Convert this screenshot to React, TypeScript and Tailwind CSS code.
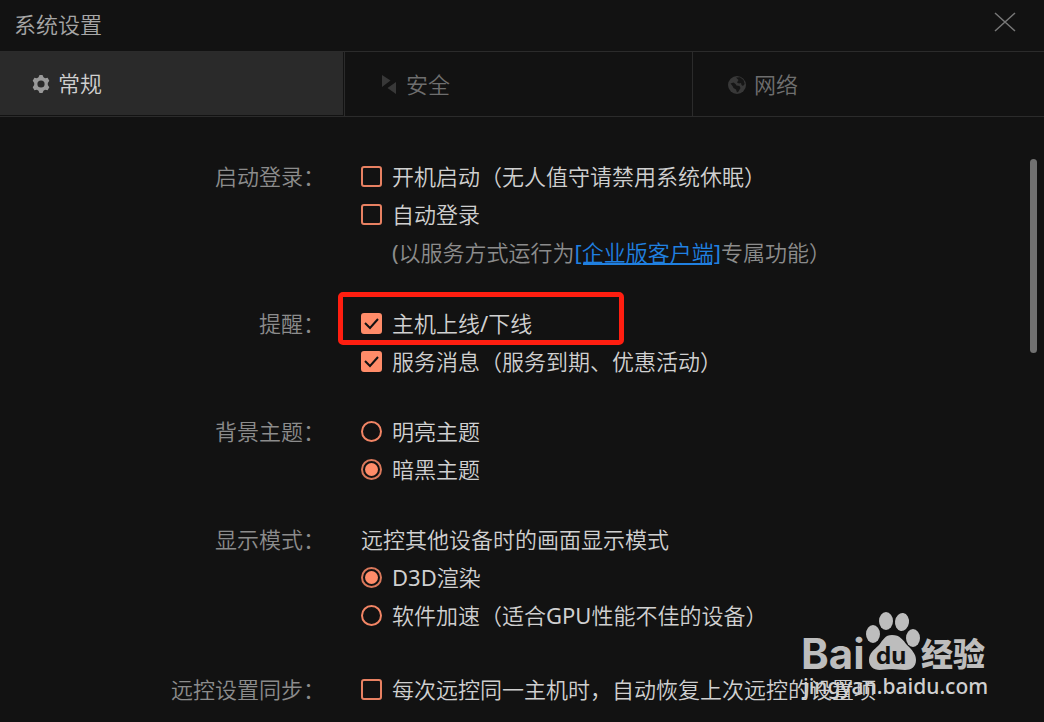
import { useState } from "react";
import type { ReactNode } from "react";

const GearIcon = () => (
  <svg className="h-[18px] w-[18px] shrink-0" viewBox="0 0 18 18" aria-hidden="true">
    <path
      d="M7.500 0h3l1 2.300 1.600.9 2.500-.4 1.700 2.900L15.800 8v2l1.500 2.300-1.700 2.900-2.500-.4-1.600.9-1 2.300h-3l-1-2.300-1.600-.9-2.500.4L.7 12.300 2.200 10V8L.7 5.700l1.700-2.900 2.500.4 1.600-.9z"
      fill="#999"
    />
    <circle cx="9" cy="9" r="3.6" fill="#2a2a2a" />
  </svg>
);

const ArrowsIcon = () => (
  <svg className="h-[19px] w-[18px] shrink-0" viewBox="0 0 18 19" fill="#383838" aria-hidden="true">
    <path d="M2 0l8.500 5.500L2 12zM16 7v12l-8.500-6z" />
  </svg>
);

const GlobeIcon = () => (
  <svg className="h-[18px] w-[18px] shrink-0" viewBox="0 0 18 18" aria-hidden="true">
    <circle cx="9" cy="9" r="9" fill="#383838" />
    <path
      d="M8 1.500l4-.3 3.500 2.800 1.200 4-1.700 2-1.500-1-.5-2-2 .5-2-1 1.500-2.500zM2.500 7.500l3-1 2 1.500 1 1.500 3 .5 1 2-2 3.500-1.500 1-1-3-2.500-1.500-1-2z"
      fill="#161616"
    />
  </svg>
);

const tabs = [
  { name: "常规", icon: GearIcon },
  { name: "安全", icon: ArrowsIcon },
  { name: "网络", icon: GlobeIcon },
];

const Section = ({ title, children }: { title: string; children: ReactNode }) => (
  <section className="flex gap-9">
    <h2 className="w-[325px] shrink-0 text-right leading-[38px] text-[#8c8c8c]">{title}</h2>
    <div className="min-w-0 flex-1">{children}</div>
  </section>
);

const Check = ({ label, checked = false }: { label: string; checked?: boolean }) => (
  <label className="flex h-[38px] w-fit items-center gap-2.5 whitespace-nowrap">
    <span className="grid shrink-0">
      <input
        type="checkbox"
        defaultChecked={checked}
        className="peer col-start-1 row-start-1 size-[21px] appearance-none rounded-[3px] border-2 border-[#e88162] checked:border-[#ff8c69] checked:bg-[#ff8c69]"
      />
      <svg
        className="pointer-events-none invisible col-start-1 row-start-1 size-[21px] peer-checked:visible"
        viewBox="0 0 21 21"
        fill="none"
        stroke="#121212"
        strokeWidth="2"
        aria-hidden="true"
      >
        <path d="M4 10l5 5 8-9" />
      </svg>
    </span>
    {label}
  </label>
);

const Radio = ({ label, name, checked = false }: { label: string; name: string; checked?: boolean }) => (
  <label className="flex h-[38px] w-fit items-center gap-2.5 whitespace-nowrap">
    <span className="grid shrink-0 place-items-center">
      <input
        type="radio"
        name={name}
        defaultChecked={checked}
        className="peer col-start-1 row-start-1 size-[21px] appearance-none rounded-full border-2 border-[#f28565] checked:border-[#d9785b]"
      />
      <span className="pointer-events-none invisible col-start-1 row-start-1 size-[13px] rounded-full bg-[#ff8c69] peer-checked:visible" />
    </span>
    {label}
  </label>
);

const Watermark = () => (
  <svg
    className="pointer-events-none absolute top-[608px] right-[52px] h-[96px] w-[192px]"
    viewBox="0 0 192 96"
    fill="#bdbdbd"
    aria-hidden="true"
  >
    <text x="1" y="61" className="font-['Inter',sans-serif] text-[42px] font-bold">Bai</text>
    <ellipse cx="73" cy="26" rx="7" ry="9" />
    <ellipse cx="86" cy="13" rx="7" ry="9" />
    <ellipse cx="102" cy="14" rx="7" ry="9" transform="rotate(8 102 14)" />
    <ellipse cx="113" cy="30" rx="7" ry="9" />
    <path d="M92 27c8 0 11 5 15 10 5 5 9 9 9 15 0 7-5 10-11 10-5 0-8-1-13-1s-8 1-12 1c-7 0-11-4-11-10 0-7 5-10 10-15 4-5 6-10 13-10z" />
    <text x="76" y="56" fill="#121212" className="font-['Inter',sans-serif] text-[24px] font-bold">du</text>
    <text x="121" y="58" className="font-['Noto_Sans_CJK_SC',sans-serif] text-[32px] font-black">经验</text>
    <text x="3" y="86" fill="#d0d0d0" className="font-['Noto_Sans',sans-serif] text-[21px] font-medium">jingyan.baidu.com</text>
  </svg>
);

export default function App() {
  const [active, setActive] = useState("常规");

  return (
    <div className="relative min-h-screen overflow-hidden bg-[#121212] font-['Noto_Sans','Noto_Sans_CJK_SC_DemiLight','Noto_Sans_CJK_SC',sans-serif] text-[22px] font-normal text-[#d0d0d0]">
      <header className="flex h-[52px] items-center justify-between border-b border-[#2b2b2b] pr-7 pl-3.5">
        <h1 className="pb-0.5 text-[#a6a6a6]">系统设置</h1>
        <button type="button" aria-label="关闭" className="mb-2">
          <svg className="size-[22px]" viewBox="0 0 22 22" fill="none" stroke="#777" strokeWidth="1.500" aria-hidden="true">
            <path d="M1 2l20 18M21 2L1 20" />
          </svg>
        </button>
      </header>

      <nav className="grid h-[65px] grid-cols-[345fr_348fr_351fr] border-b border-[#2b2b2b]">
        {tabs.map(({ name, icon: Icon }) => (
          <div key={name} className="border-r border-[#2b2b2b] pr-px pb-px last:border-r-0">
            <button
              type="button"
              onClick={() => setActive(name)}
              className={
                active === name
                  ? "flex h-full w-full items-center gap-2 bg-[#2a2a2a] pl-8 text-[#d0d0d0]"
                  : "flex h-full w-full items-center gap-2 pt-0.5 pl-[35px] text-[#6e6e6e]"
              }
            >
              <Icon />
              {name}
            </button>
          </div>
        ))}
      </nav>

      <main className="flex items-start">
        <div className="flex flex-1 flex-col gap-8 pt-10">
          <div className="pb-px">
            <Section title="启动登录：">
              <Check label="开机启动（无人值守请禁用系统休眠）" />
              <Check label="自动登录" />
              <p className="pl-[31px] leading-[38px] whitespace-nowrap text-[#8c8c8c]">
                (以服务方式运行为
                <a href="#enterprise" className="text-[#2080e0] underline">[企业版客户端]</a>
                专属功能）
              </p>
            </Section>
          </div>
          <Section title="提醒：">
            <div className="relative">
              <Check label="主机上线/下线" checked />
              <div className="pointer-events-none absolute -top-3 -left-[23px] h-[53px] w-[286px] rounded-[5px] border-[5px] border-[#ff1e10]" />
            </div>
            <Check label="服务消息（服务到期、优惠活动）" checked />
          </Section>
          <Section title="背景主题：">
            <Radio name="theme" label="明亮主题" />
            <Radio name="theme" label="暗黑主题" checked />
          </Section>
          <Section title="显示模式：">
            <p className="leading-[38px]">远控其他设备时的画面显示模式</p>
            <Radio name="render" label="D3D渲染" checked />
            <Radio name="render" label="软件加速（适合GPU性能不佳的设备）" />
          </Section>
          <div className="pt-1">
            <Section title="远控设置同步：">
              <Check label="每次远控同一主机时，自动恢复上次远控的设置项" />
            </Section>
          </div>
        </div>
        <div className="mt-[42px] mr-[7px] h-[194px] w-[7px] rounded-full bg-[#717171]" />
      </main>

      <Watermark />
    </div>
  );
}
